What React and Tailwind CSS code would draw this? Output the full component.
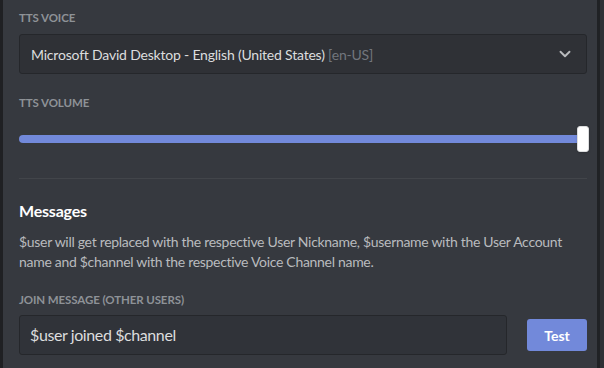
import { ChevronDown } from "lucide-react";

const font = { fontFamily: "Lato, 'Noto Sans', sans-serif" };

function Label({ children }) {
  return (
    <div className="text-[11.5px] font-bold uppercase leading-4 tracking-[-0.1px] text-[#8e9297]">
      {children}
    </div>
  );
}

export default function App() {
  return (
    <div style={font} className="flex h-[368px] w-[604px] overflow-hidden bg-[#36393f]">
      <div className="w-[3px] shrink-0 bg-[#1f2023]" />
      <div className="flex flex-1 flex-col pl-4 pr-[10px] pt-[10px]">
        <Label>TTS Voice</Label>
        <div className="mt-2 flex h-10 items-center justify-between rounded-[3px] border border-[#25272b] bg-[#2f3136] pl-[11px] pr-[12px]">
          <span className="text-[14px] tracking-[-0.2px] text-[#dcddde]">
            Microsoft David Desktop - English (United States){" "}
            <span className="text-[#72767d]">[en-US]</span>
          </span>
          <ChevronDown size={18} strokeWidth={2.5} className="text-[#b9bbbe]" />
        </div>

        <div className="mt-[21px]">
          <Label>TTS Volume</Label>
        </div>
        <div className="relative mt-[15px] flex h-[26px] items-center">
          <div className="h-2 flex-1 rounded-full bg-[#7289da]" />
          <div className="absolute right-[-2px] top-0 h-[26px] w-3 rounded-[3px] border border-[#dcddde] bg-white shadow" />
        </div>

        <div className="mt-[26px] h-px bg-[#42454a]" />

        <div className="mt-[22px] text-[16px] font-bold leading-5 tracking-[-0.2px] text-white">Messages</div>
        <p className="mt-[11px] text-[14px] leading-5 tracking-[-0.3px] text-[#b9bbbe]">
          $user will get replaced with the respective User Nickname, $username with the User Account name and $channel with the respective Voice Channel name.
        </p>

        <div className="mt-[20px]">
          <Label>Join Message (Other Users)</Label>
        </div>
        <div className="mt-[7px] flex items-center">
          <div className="flex h-10 w-[488px] items-center rounded-[3px] border border-[#25272b] bg-[#303339] px-[10px] text-[16px] tracking-[-0.4px] text-[#dcddde]">
            $user joined $channel
          </div>
          <button className="ml-auto h-8 w-[60px] rounded-[3px] bg-[#7289da] text-[14px] font-bold text-white">
            Test
          </button>
        </div>
      </div>
      <div className="w-[3px] shrink-0 bg-[#202225]" />
      <div className="w-1 shrink-0 bg-[#2e3035]" />
    </div>
  );
}
